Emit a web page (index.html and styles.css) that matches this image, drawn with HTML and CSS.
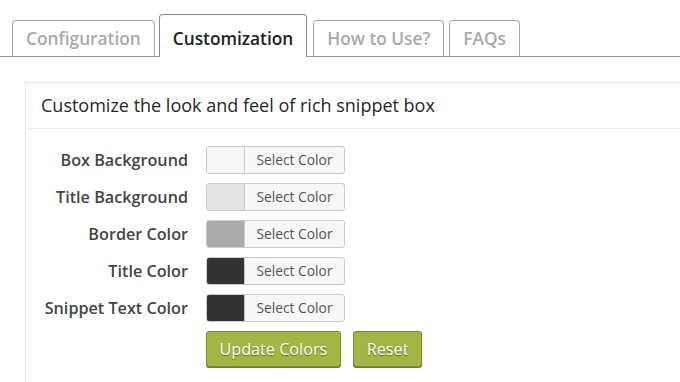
FILE: index.html
```html
<!DOCTYPE html>
<html lang="en">
<head>
    <meta charset="UTF-8">
    <meta name="viewport" content="width=device-width, initial-scale=1.0">
    <title>Rich Snippets - Customization</title>
    <link rel="stylesheet" href="styles.css">
</head>
<body>
    <div class="tabs">
        <a class="tab" href="#">Configuration</a>
        <a class="tab active" href="#">Customization</a>
        <a class="tab tab-how" href="#">How to Use?</a>
        <a class="tab" href="#">FAQs</a>
    </div>

    <div class="panel">
        <h3 class="panel-title">Customize the look and feel of rich snippet box</h3>
        <div class="panel-body">
            <div class="row">
                <label>Box Background</label>
                <div class="picker"><span class="swatch swatch-box"></span><span class="picker-text">Select Color</span></div>
            </div>
            <div class="row">
                <label>Title Background</label>
                <div class="picker"><span class="swatch swatch-title-bg"></span><span class="picker-text">Select Color</span></div>
            </div>
            <div class="row">
                <label>Border Color</label>
                <div class="picker"><span class="swatch swatch-border"></span><span class="picker-text">Select Color</span></div>
            </div>
            <div class="row">
                <label>Title Color</label>
                <div class="picker"><span class="swatch swatch-dark"></span><span class="picker-text">Select Color</span></div>
            </div>
            <div class="row">
                <label>Snippet Text Color</label>
                <div class="picker"><span class="swatch swatch-dark"></span><span class="picker-text">Select Color</span></div>
            </div>
            <div class="row">
                <span></span>
                <div class="actions">
                    <button class="btn btn-update">Update Colors</button>
                    <button class="btn btn-reset">Reset</button>
                </div>
            </div>
        </div>
    </div>
</body>
</html>
```

FILE: styles.css
```css
body {
    margin: 0;
    font-family: "Open Sans", Arial, sans-serif;
    background: #fff;
    overflow: hidden;
}
.tabs {
    display: flex;
    align-items: flex-end;
    padding: 14px 0 0 12px;
    border-bottom: 1px solid #999;
    height: 42px;
    box-sizing: content-box;
}
.tab {
    display: block;
    height: 35px;
    line-height: 35px;
    padding: 0 13px;
    margin-right: 4px;
    border: 1px solid #a8a8a8;
    border-bottom: none;
    border-radius: 4px 4px 0 0;
    color: #aaa;
    font-size: 17.3px;
    font-weight: 600;
    text-decoration: none;
    background: #fff;
}
.tab.active {
    height: 42px;
    line-height: 47px;
    margin-bottom: -1px;
    border-color: #888;
    color: #222;
    padding: 0 13px;
}
.tab-how {
    margin-left: 2px;
    margin-right: 5px;
}
.panel {
    margin: 25px 0 0 25px;
    border: 1px solid #e5e5e5;
    border-right: none;
    border-bottom: none;
    height: 300px;
}
.panel-title {
    margin: 0;
    height: 45px;
    line-height: 45px;
    padding-left: 15px;
    font-size: 18px;
    font-weight: 400;
    color: #23282d;
    border-bottom: 1px solid #eee;
}
.panel-body {
    padding-top: 17px;
}
.row {
    display: grid;
    grid-template-columns: 162px 1fr;
    column-gap: 18px;
    align-items: center;
    margin-bottom: 9px;
}
.row label {
    text-align: right;
    font-size: 16.2px;
    font-weight: 600;
    color: #444;
}
.picker {
    display: flex;
    width: 137px;
    height: 26px;
    border: 1px solid #ccc;
    border-radius: 3px;
    background: #f7f7f7;
    overflow: hidden;
}
.swatch {
    width: 37px;
    border-right: 1px solid #ccc;
}
.swatch-box { background: #f4f5f4; }
.swatch-title-bg { background: #e3e3e3; }
.swatch-border { background: #aaa; }
.swatch-dark { background: #333; }
.picker-text {
    flex: 1;
    text-align: center;
    line-height: 26px;
    font-size: 13.8px;
    color: #555;
}
.actions {
    display: flex;
    gap: 12px;
}
.btn {
    height: 36px;
    padding: 0 12.5px;
    border: 1px solid #7b8a2f;
    border-radius: 3px;
    background: #a3b543;
    color: #fff;
    font-family: "Open Sans", Arial, sans-serif;
    font-size: 16.2px;
    text-shadow: 0 1px 1px rgba(0, 0, 0, 0.4);
    box-shadow: 0 1px 0 #6f7e27;
    cursor: pointer;
}
.btn-reset {
    padding: 0 13px;
}
```
